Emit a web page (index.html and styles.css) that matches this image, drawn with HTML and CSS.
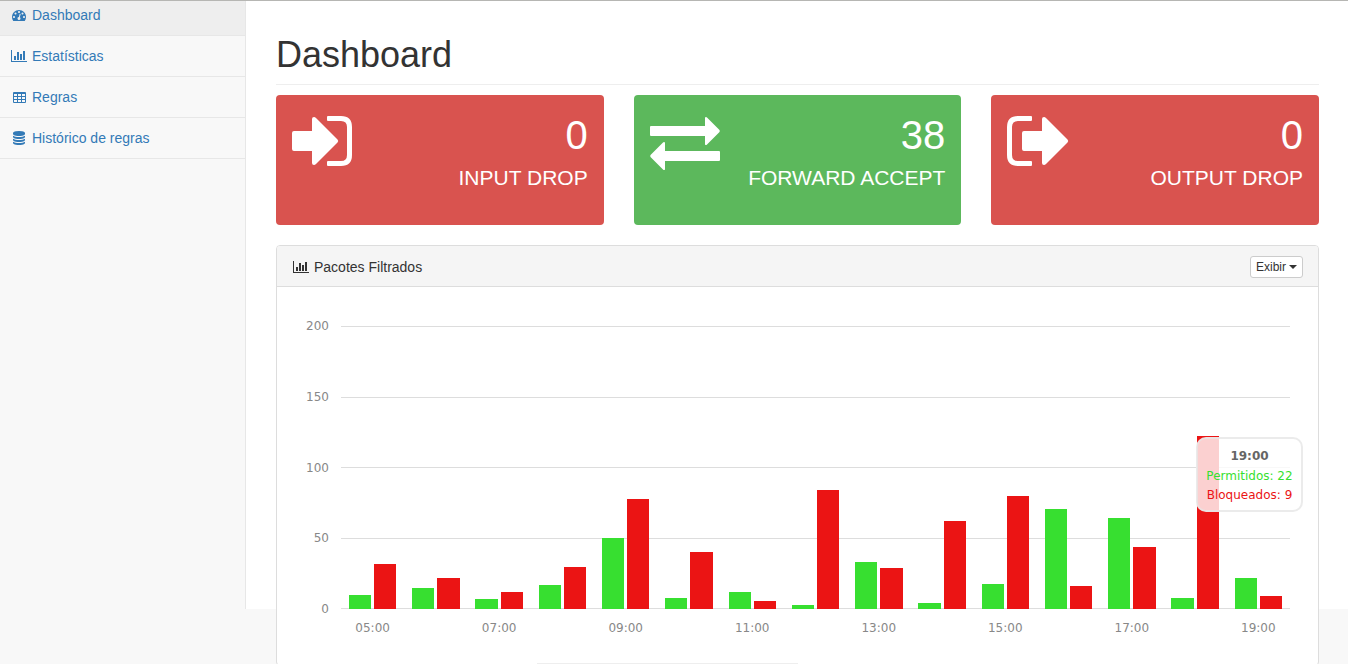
FILE: index.html
```html
<!DOCTYPE html>
<html lang="pt-BR">
<head>
<meta charset="utf-8">
<title>Dashboard</title>
<link rel="stylesheet" href="styles.css">
</head>
<body>
<div class="layout">
  <nav class="sidebar">
    <ul class="menu">
      <li><a class="menu-link active" href="#">
        <span class="menu-icon"><svg width="14" height="14" viewBox="0 0 1792 1792" fill="currentColor"><path d="M384 1152q0-53-37.5-90.5t-90.5-37.5-90.5 37.5-37.5 90.5 37.5 90.5 90.5 37.5 90.5-37.5 37.5-90.5zm192-448q0-53-37.5-90.5t-90.5-37.5-90.5 37.5-37.5 90.5 37.5 90.5 90.5 37.5 90.5-37.5 37.5-90.5zm428 481l101-382q6-26-7.5-48.5t-38.5-29.5-48 6.5-30 39.5l-101 382q-60 5-107 43.5t-63 98.5q-20 77 20 146t117 89 146-20 89-117q16-60-6-117t-72-91zm660-33q0-53-37.5-90.5t-90.5-37.5-90.5 37.5-37.5 90.5 37.5 90.5 90.5 37.5 90.5-37.5 37.5-90.5zm-640-640q0-53-37.5-90.5t-90.5-37.5-90.5 37.5-37.5 90.5 37.5 90.5 90.5 37.5 90.5-37.5 37.5-90.5zm448 192q0-53-37.5-90.5t-90.5-37.5-90.5 37.5-37.5 90.5 37.5 90.5 90.5 37.5 90.5-37.5 37.5-90.5zm320 448q0 261-141 483-19 29-54 29h-1402q-35 0-54-29-141-221-141-483 0-182 71-348t191-286 286-191 348-71 348 71 286 191 191 286 71 348z"/></svg></span>Dashboard</a></li>
      <li><a class="menu-link" href="#">
        <span class="menu-icon"><svg width="16" height="12" viewBox="0 0 16 12" fill="currentColor" shape-rendering="crispEdges"><path d="M0 0h1v11h15v1H0zM3 6h2v4H3zM6 2h2v8H6zM9 4h2v6H9zM12 1h2v9h-2z"/></svg></span>Estatísticas</a></li>
      <li><a class="menu-link" href="#">
        <span class="menu-icon"><svg width="13" height="11" viewBox="0 0 13 11" fill="currentColor"><path fill-rule="evenodd" d="M1 0h11a1 1 0 0 1 1 1v9a1 1 0 0 1-1 1H1a1 1 0 0 1-1-1V1a1 1 0 0 1 1-1zM1 2v2h3V2zM5 2v2h3V2zM9 2v2h3V2zM1 5v2h3V5zM5 5v2h3V5zM9 5v2h3V5zM1 8v2h3V8zM5 8v2h3V8zM9 8v2h3V8z"/></svg></span>Regras</a></li>
      <li><a class="menu-link" href="#">
        <span class="menu-icon"><svg width="14" height="14" viewBox="0 0 1792 1792" fill="currentColor"><path d="M896 768q237 0 443-43t325-127v170q0 69-103 128t-280 93.5-385 34.5-385-34.5-280-93.5-103-128v-170q119 84 325 127t443 43zm0 768q237 0 443-43t325-127v170q0 69-103 128t-280 93.5-385 34.5-385-34.5-280-93.5-103-128v-170q119 84 325 127t443 43zm0-384q237 0 443-43t325-127v170q0 69-103 128t-280 93.5-385 34.5-385-34.5-280-93.5-103-128v-170q119 84 325 127t443 43zm0-1152q208 0 385 34.5t280 93.5 103 128v128q0 69-103 128t-280 93.5-385 34.5-385-34.5-280-93.5-103-128v-128q0-69 103-128t280-93.5 385-34.5z"/></svg></span>Histórico de regras</a></li>
    </ul>
  </nav>

  <main class="page">
    <h1 class="page-header">Dashboard</h1>

    <div class="cards">
      <section class="card card-red">
        <svg class="card-icon" width="60" height="50" viewBox="0 0 60 50" fill="#fff"><path d="M2 15h18V3Q20 1 22 1Q23 1 24 2L45.500 23.500Q47 25 45.500 26.500L24 48Q23 49 22 49Q20 49 20 47V35H2Q0 35 0 33V17Q0 15 2 15z"/><path d="M36 0H49Q60 0 60 11V39Q60 50 49 50H36Q35 50 35 49V46Q35 45 36 45H49Q55 45 55 39V11Q55 5 49 5H36Q35 5 35 4V1Q35 0 36 0z"/></svg>
        <div class="card-text"><div class="card-number">0</div><div class="card-label">INPUT DROP</div></div>
      </section>
      <section class="card card-green">
        <svg class="card-icon" width="70" height="55" viewBox="0 0 70 55" fill="#fff"><path d="M1 10H55V2Q55 1 56 1L57 1.500L69.500 14Q70 15 69.500 16L57 28.500Q56 29.500 55 28.500V20H1Q0 20 0 19V11Q0 10 1 10z"/><path d="M69 35H15V27Q15 26 14 26L13 26.500L.5 39Q0 40 .5 41L13 53.500Q14 54.500 15 53.500V45H69Q70 45 70 44V36Q70 35 69 35z"/></svg>
        <div class="card-text"><div class="card-number">38</div><div class="card-label">FORWARD ACCEPT</div></div>
      </section>
      <section class="card card-red">
        <svg class="card-icon" width="62" height="50" viewBox="0 0 62 50" fill="#fff"><path d="M17 15H35V3Q35 1 37 1Q38 1 39 2L60.500 23.500Q62 25 60.500 26.500L39 48Q38 49 37 49Q35 49 35 47V35H17Q15 35 15 33V17Q15 15 17 15z"/><path d="M24 0H11Q0 0 0 11V39Q0 50 11 50H24Q25 50 25 49V46Q25 45 24 45H11Q5 45 5 39V11Q5 5 11 5H24Q25 5 25 4V1Q25 0 24 0z"/></svg>
        <div class="card-text"><div class="card-number">0</div><div class="card-label">OUTPUT DROP</div></div>
      </section>
    </div>

    <section class="panel">
      <header class="panel-heading">
        <svg width="16" height="12" viewBox="0 0 16 12" fill="currentColor" shape-rendering="crispEdges"><path d="M0 0h1v11h15v1H0zM3 6h2v4H3zM6 2h2v8H6zM9 4h2v6H9zM12 1h2v9h-2z"/></svg>
        <span class="panel-title">Pacotes Filtrados</span>
        <button class="show-button" type="button">Exibir<span class="caret"></span></button>
      </header>
      <div class="panel-body">
        <div class="chart">
          <div class="y-axis"><span>200</span><span>150</span><span>100</span><span>50</span><span>0</span></div>
          <div class="grid-lines"><i></i><i></i><i></i><i></i><i></i></div>
          <div class="bars" id="bars"></div>
          <div class="x-axis" id="x-axis"></div>
          <div class="tooltip">
            <div class="tooltip-title">19:00</div>
            <div class="tooltip-row allowed">Permitidos: 22</div>
            <div class="tooltip-row blocked">Bloqueados: 9</div>
          </div>
        </div>
      </div>
      <div class="panel-footer"><div class="footer-box"></div></div>
    </section>
  </main>
</div>
<script src="chart.js"></script>
</body>
</html>
```
FILE: styles.css
```css
* { box-sizing: border-box; }

body {
  margin: 0;
  height: 100vh;
  overflow: hidden;
  border-top: 1px solid #b6b6b3;
  background: #f8f8f8;
  color: #333;
  font: 14px/20px "Liberation Sans", Arial, sans-serif;
}

.layout { display: flex; }

.sidebar { flex: 0 0 245px; }
.menu { margin: 0; padding: 0; list-style: none; }
.menu-link {
  display: flex;
  align-items: center;
  padding: 10px;
  border-bottom: 1px solid #e7e7e7;
  color: #337ab7;
  text-decoration: none;
}
.menu-link.active { padding-top: 4px; background: #eee; }
.menu-icon {
  display: flex;
  justify-content: center;
  width: 18px;
  margin-right: 4px;
}

.page {
  flex: 1;
  min-width: 0;
  height: calc(100vh - 56px);
  padding: 34px 29px 0 30px;
  border-left: 1px solid #e7e7e7;
  background: #fff;
}
.page-header {
  margin: 0 0 10px;
  padding-bottom: 9px;
  border-bottom: 1px solid #eee;
  font-size: 36px;
  font-weight: 400;
  line-height: 40px;
}

.cards {
  display: grid;
  grid-template-columns: repeat(3, 1fr);
  gap: 30px;
  margin-bottom: 20px;
}
.card {
  display: flex;
  justify-content: space-between;
  align-items: flex-start;
  padding: 16px 16px 28px;
  border-radius: 4px;
  color: #fff;
}
.card-red { background: #d9534f; }
.card-green { background: #5cb85c; }
.card-icon { margin-top: 5px; }
.card-text { text-align: right; }
.card-number { font-size: 40px; line-height: 48px; }
.card-label { font-size: 21px; line-height: 38px; }

.panel {
  border: 1px solid #ddd;
  border-radius: 4px;
  background: #fff;
}
.panel-heading {
  display: flex;
  align-items: center;
  gap: 5px;
  padding: 10px 15px 8px 16px;
  border-bottom: 1px solid #ddd;
  border-radius: 3px 3px 0 0;
  background: #f5f5f5;
}
.panel-title { flex: 1; }
.show-button {
  display: flex;
  align-items: center;
  gap: 3px;
  padding: 1px 5px;
  border: 1px solid #ccc;
  border-radius: 3px;
  background: #fff;
  color: #333;
  font: 12px/18px "Liberation Sans", Arial, sans-serif;
}
.caret {
  border-top: 4px solid #333;
  border-right: 4px solid transparent;
  border-left: 4px solid transparent;
}

.panel-body { padding: 15px; }
.chart {
  position: relative;
  display: grid;
  grid-template-columns: 37px 1fr;
  grid-template-rows: 283px auto;
  column-gap: 12px;
  padding: 24px 13px 12px 0;
  color: #888;
  font: 12px/16px "DejaVu Sans", sans-serif;
}
.y-axis {
  grid-area: 1 / 1;
  display: flex;
  flex-direction: column;
  justify-content: space-between;
  text-align: right;
  line-height: 0;
}
.grid-lines {
  grid-area: 1 / 2;
  display: flex;
  flex-direction: column;
  justify-content: space-between;
}
.grid-lines i { height: 1px; background: #ddd; }
.bars, .x-axis {
  display: grid;
  grid-template-columns: repeat(15, 1fr);
}
.bars { grid-area: 1 / 2; }
.x-axis { grid-area: 2 / 2; padding-top: 11px; }
.x-axis span { justify-self: center; }
.slot {
  display: flex;
  align-items: flex-end;
  gap: 3px;
  padding: 0 12.5%;
}
.bar { flex: 1; }
.bar-allowed { background: #37df30; }
.bar-blocked { background: #eb1414; }

.tooltip {
  position: absolute;
  top: 135px;
  right: 0;
  min-width: 107px;
  padding: 6px 6px 5px;
  border: 2px solid rgba(230, 230, 230, 0.8);
  border-radius: 10px;
  background: rgba(255, 255, 255, 0.8);
  text-align: center;
  white-space: nowrap;
}
.tooltip-title { margin: 3px 0; color: #666; font-weight: 700; }
.tooltip-row { margin: 1px 0; line-height: 18px; }
.allowed { color: #37df30; }
.blocked { color: #eb1414; }

.panel-footer { display: grid; grid-template-columns: repeat(4, 1fr); }
.footer-box { grid-column: 2; height: 2px; border-top: 1px solid #eee; }
```
FILE: chart.js
```js
const MAX = 200;
const FIRST_HOUR = 5;
// [allowed, blocked] packets for each hour
const packets = [
  [10, 32], [15, 22], [7, 12], [17, 30], [50, 78],
  [8, 40], [12, 6], [3, 84], [33, 29], [4, 62],
  [18, 80], [71, 16], [64, 44], [8, 122], [22, 9]
];

const bars = document.getElementById("bars");
const axis = document.getElementById("x-axis");

packets.forEach((pair, index) => {
  const slot = document.createElement("div");
  slot.className = "slot";
  pair.forEach((value, series) => {
    const bar = document.createElement("div");
    bar.className = series ? "bar bar-blocked" : "bar bar-allowed";
    bar.style.height = (value / MAX) * 100 + "%";
    slot.append(bar);
  });
  bars.append(slot);

  const label = document.createElement("span");
  if (index % 2 === 0) {
    label.textContent = String(FIRST_HOUR + index).padStart(2, "0") + ":00";
  }
  axis.append(label);
});
```
